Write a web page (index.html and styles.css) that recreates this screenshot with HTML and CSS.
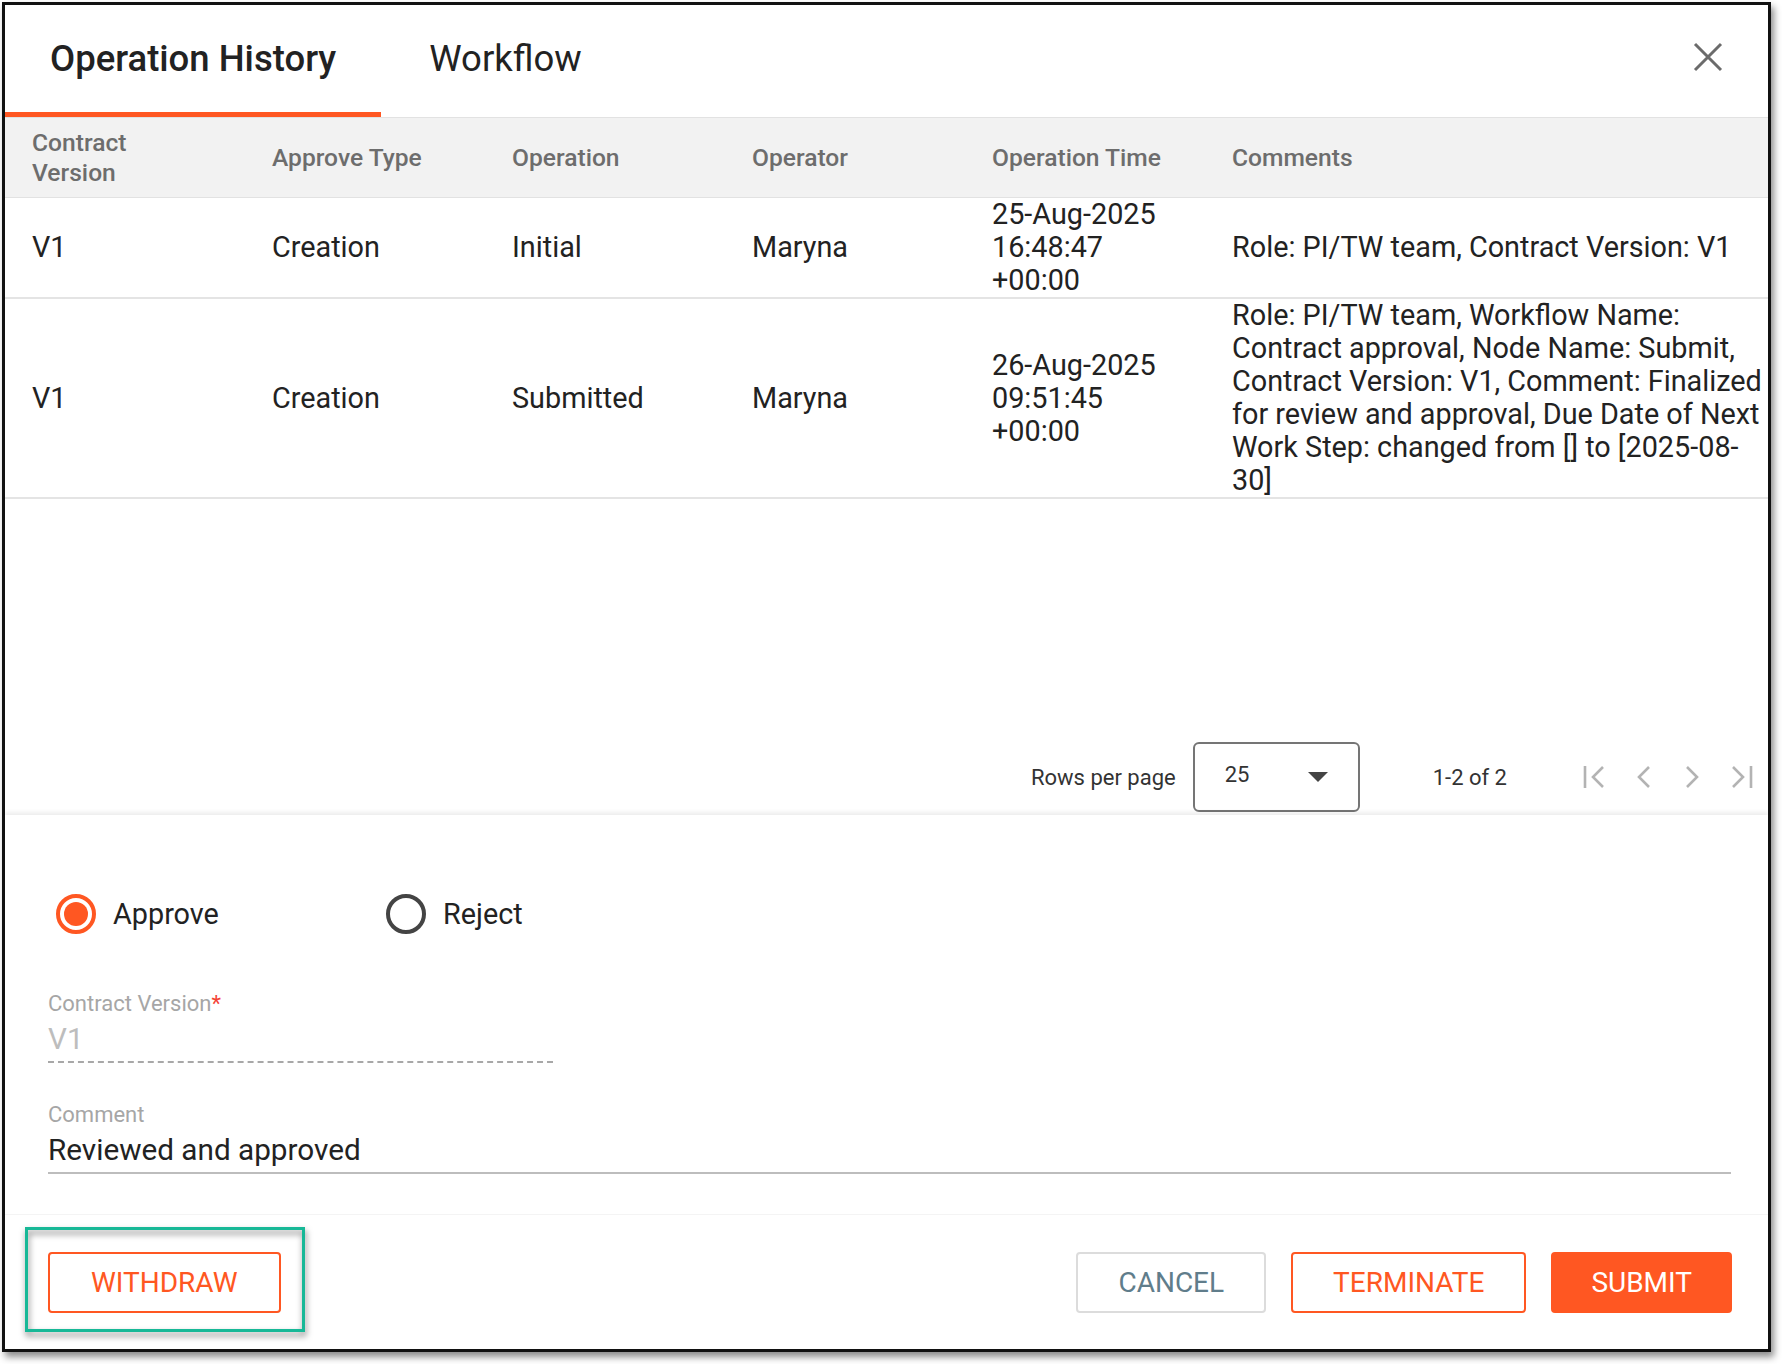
FILE: index.html
```html
<html>
	<head>
		<title>Operation History</title>
		<link rel="stylesheet" href="styles.css">
	</head>
	<body>

		<div class="dialog">

			<div class="tabbar">
				<div class="tab active">Operation History</div>
				<div class="tab">Workflow</div>
				<button class="close" title="Close">
					<svg width="30" height="30" viewBox="0 0 30 30"><path d="M2 2 L28 28 M28 2 L2 28" /></svg>
				</button>
			</div>

			<div class="history">
				<table class="ops">
					<colgroup>
						<col class="col"><col class="col"><col class="col"><col class="col"><col class="col"><col>
					</colgroup>
					<thead>
						<tr>
							<th>Contract<br>Version</th>
							<th>Approve Type</th>
							<th>Operation</th>
							<th>Operator</th>
							<th>Operation Time</th>
							<th>Comments</th>
						</tr>
					</thead>
					<tbody>
						<tr>
							<td>V1</td>
							<td>Creation</td>
							<td>Initial</td>
							<td>Maryna</td>
							<td>25-Aug-2025 16:48:47 +00:00</td>
							<td class="comments">Role: PI/TW team, Contract Version: V1</td>
						</tr>
						<tr>
							<td>V1</td>
							<td>Creation</td>
							<td>Submitted</td>
							<td>Maryna</td>
							<td>26-Aug-2025 09:51:45 +00:00</td>
							<td class="comments">Role: PI/TW team, Workflow Name: Contract approval, Node Name: Submit, Contract Version: V1, Comment: Finalized for review and approval, Due Date of Next Work Step: changed from [] to [2025-08-<wbr>30]</td>
						</tr>
					</tbody>
				</table>

				<div class="pager">
					<span class="pager-label">Rows per page</span>
					<div class="rows-select">
						<span>25</span>
						<svg width="20" height="10" viewBox="0 0 20 10"><polygon points="0,0 20,0 10,10" /></svg>
					</div>
					<span class="pager-range">1-2 of 2</span>
					<div class="pager-nav">
						<button class="nav" disabled>
							<svg width="28" height="26" viewBox="0 0 28 26"><path d="M3 2 V24 M21 3 L11 13 L21 23" /></svg>
						</button>
						<button class="nav" disabled>
							<svg width="28" height="26" viewBox="0 0 28 26"><path d="M19 3 L9 13 L19 23" /></svg>
						</button>
						<button class="nav" disabled>
							<svg width="28" height="26" viewBox="0 0 28 26"><path d="M9 3 L19 13 L9 23" /></svg>
						</button>
						<button class="nav" disabled>
							<svg width="28" height="26" viewBox="0 0 28 26"><path d="M25 2 V24 M7 3 L17 13 L7 23" /></svg>
						</button>
					</div>
				</div>
			</div>

			<div class="decision">
				<div class="radio-group">
					<label class="radio checked"><span class="radio-mark"></span>Approve</label>
					<label class="radio"><span class="radio-mark"></span>Reject</label>
				</div>

				<div class="field field-version">
					<div class="field-label">Contract Version<span class="req">*</span></div>
					<div class="field-value disabled">V1</div>
				</div>

				<div class="field field-comment">
					<div class="field-label">Comment</div>
					<div class="field-value">Reviewed and approved</div>
				</div>
			</div>

			<div class="footer">
				<div class="marked">
					<button class="btn btn-outline">WITHDRAW</button>
				</div>
				<button class="btn btn-cancel">CANCEL</button>
				<button class="btn btn-outline">TERMINATE</button>
				<button class="btn btn-primary">SUBMIT</button>
			</div>

		</div>

	</body>
</html>
```

FILE: styles.css
```css
body { margin:0; background:#fff; font-family:Roboto, "Noto Sans", Arial, sans-serif; color:#222; }

.dialog {
	margin:2px 0 0 2px;
	width:1763px;
	height:1344px;
	border:3px solid #111;
	box-shadow:3px 5px 7px rgba(0,0,0,.45);
	background:#fff;
	display:flex;
	flex-direction:column;
}

/* tabs */
.tabbar { display:flex; height:112px; flex:none; }
.tab {
	display:flex;
	align-items:center;
	padding:0 45px;
	font-size:36.5px;
	color:#222;
	border-bottom:5px solid transparent;
}
.tab + .tab { padding-left:48px; }
.tab.active { font-weight:500; border-bottom-color:#ff5722; }

.close {
	margin:0 45px 8px auto;
	align-self:center;
	padding:0;
	border:0;
	background:none;
	line-height:0;
}
.close path { stroke:#6b6b6b; stroke-width:3; fill:none; }

/* table */
.history { height:698px; flex:none; display:flex; flex-direction:column; }

.ops { width:100%; border-collapse:collapse; table-layout:fixed; }
.ops .col { width:240px; }
.ops th {
	height:80px;
	padding:0 2px 0 27px;
	background:#f2f2f2;
	border-top:1px solid #e2e2e2;
	border-bottom:1px solid #e2e2e2;
	text-align:left;
	font-size:24.6px;
	font-weight:500;
	line-height:30px;
	color:#6d6d6d;
}
.ops td {
	padding:0 24px 0 27px;
	border-bottom:2px solid #e4e4e4;
	font-size:28.8px;
	line-height:33px;
	color:#222;
	vertical-align:middle;
}
.ops td.comments { padding-right:2px; }

/* pagination */
.pager {
	margin-top:auto;
	height:76px;
	display:flex;
	align-items:center;
	justify-content:flex-end;
	padding-right:4px;
	font-size:22px;
	color:#333;
}
.rows-select {
	margin-left:17px;
	width:167px;
	height:70px;
	box-sizing:border-box;
	border:2px solid #757575;
	border-radius:6px;
	display:flex;
	align-items:center;
	padding:0 30px 6px 30px;
}
.rows-select span { flex:1; }
.rows-select svg { fill:#444; margin-top:6px; }
.pager-range { margin-left:73px; }
.pager-nav { display:flex; margin-left:65px; }
.nav { width:48px; height:48px; padding:0; border:0; background:none; display:flex; align-items:center; justify-content:center; }
.nav path { stroke:#b3b3b3; stroke-width:2.6; fill:none; }

/* approve / reject form */
.decision {
	position:relative;
	flex:none;
	padding:79px 0 40px 43px;
	box-shadow:0 -3px 4px rgba(0,0,0,.07);
}
.radio-group { display:flex; padding-left:8px; height:40px; }
.radio { display:flex; align-items:center; width:330px; font-size:28.8px; color:#222; }
.radio-mark {
	width:40px;
	height:40px;
	box-sizing:border-box;
	border:4px solid #444;
	border-radius:50%;
	margin-right:17px;
	display:flex;
	align-items:center;
	justify-content:center;
}
.radio.checked .radio-mark { border-color:#ff5722; }
.radio.checked .radio-mark::after { content:""; width:24px; height:24px; border-radius:50%; background:#ff5722; }

.field-label { font-size:22px; line-height:26px; color:#a6a6a6; }
.req { color:#f44336; }
.field-value { margin-top:4px; padding-bottom:4px; font-size:29.7px; line-height:36px; color:#222; }
.field-value.disabled { color:#bdbdbd; }
.field-version { margin-top:57px; width:505px; }
.field-version .field-value { border-bottom:2px dashed #a8a8a8; }
.field-comment { margin-top:39px; width:1683px; }
.field-comment .field-value { border-bottom:2px solid #bdbdbd; }

/* footer buttons */
.footer {
	flex:1;
	display:flex;
	align-items:center;
	gap:25px;
	padding:0 36px 0 20px;
	border-top:1px solid #f4f4f4;
}
.marked { position:relative; padding:25px 24px 19px 23px; margin:0 auto 6px 0; }
.marked::after {
	content:"";
	position:absolute;
	top:0; left:0; right:0; bottom:0;
	border:3px solid #17b897;
	filter:drop-shadow(1px 4px 3px rgba(0,0,0,.5));
}

.btn {
	height:61px;
	padding:0 40px;
	border:2px solid #ff5722;
	border-radius:4px;
	background:#fff;
	font-family:Roboto, "Noto Sans", Arial, sans-serif;
	font-size:28px;
	color:#ff5722;
}
.btn-cancel { border-color:#dcdcdc; color:#607d8b; }
.btn-primary { background:#ff5722; color:#fff; padding:0 38px; }
.marked .btn { padding:0 41px; }
```
